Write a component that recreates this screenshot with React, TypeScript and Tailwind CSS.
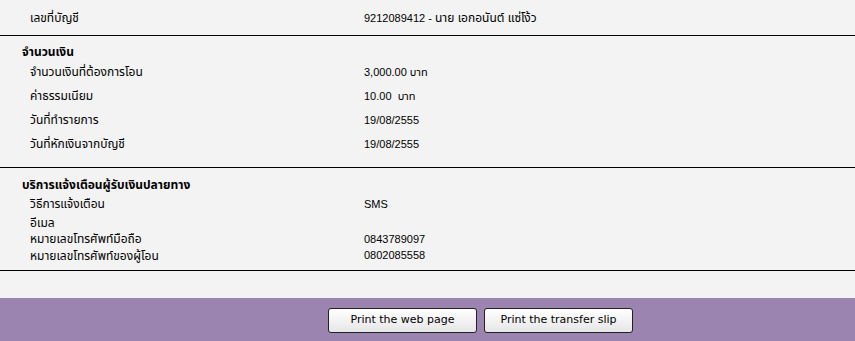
import React from "react";

const font = { fontFamily: '"Liberation Sans", "Noto Sans Thai", "Noto Sans", sans-serif' };

function Row({ label, value, h }: { label: string; value?: React.ReactNode; h: string }) {
  return (
    <div className={`flex items-center ${h}`}>
      <div className="w-[364px] pl-[30px] text-[12px]">{label}</div>
      <div>{value}</div>
    </div>
  );
}

export default function App() {
  const btn =
    "w-[149px] h-[25px] rounded-[3px] border border-[#222] bg-gradient-to-b from-white to-[#e6e6e6] text-[11px] text-black";
  const btnFont = { fontFamily: '"DejaVu Sans", sans-serif' };
  return (
    <div className="w-[855px] h-[341px] bg-[#f3f3f3] text-[11px] text-black flex flex-col" style={font}>
      <div className="h-[35px] flex items-center">
        <div className="w-[364px] pl-[30px] text-[12px]">เลขที่บัญชี</div>
        <div>
          9212089412 - <span className="text-[12px]">นาย เอกอนันต์ แซ่โง้ว</span>
        </div>
      </div>
      <div className="h-px bg-black" />
      <div className="pt-[8px] pb-[11px]">
        <div className="h-[16px] flex items-center pl-[22px] font-bold text-[12px]">จำนวนเงิน</div>
        <Row h="h-[24px]" label="จำนวนเงินที่ต้องการโอน" value="3,000.00 บาท" />
        <Row h="h-[24px]" label="ค่าธรรมเนียม" value={<span className="whitespace-pre">10.00  บาท</span>} />
        <Row h="h-[24px]" label="วันที่ทำรายการ" value="19/08/2555" />
        <Row h="h-[24px]" label="วันที่หักเงินจากบัญชี" value="19/08/2555" />
      </div>
      <div className="h-px bg-black" />
      <div className="pt-[9px] pb-[6px]">
        <div className="h-[16px] flex items-center pl-[22px] font-bold text-[12px]">บริการแจ้งเตือนผู้รับเงินปลายทาง</div>
        <Row h="h-[22px]" label="วิธีการแจ้งเตือน" value="SMS" />
        <Row h="h-[16px]" label="อีเมล" />
        <Row h="h-[16px]" label="หมายเลขโทรศัพท์มือถือ" value="0843789097" />
        <Row h="h-[17px]" label="หมายเลขโทรศัพท์ของผู้โอน" value="0802085558" />
      </div>
      <div className="h-px bg-black" />
      <div className="h-[27px]" />
      <div className="flex-1 bg-[#9b85b0] pt-[10px] pl-[328px] flex gap-[7px] items-start">
        <button className={btn} style={btnFont}>Print the web page</button>
        <button className={btn} style={btnFont}>Print the transfer slip</button>
      </div>
    </div>
  );
}
